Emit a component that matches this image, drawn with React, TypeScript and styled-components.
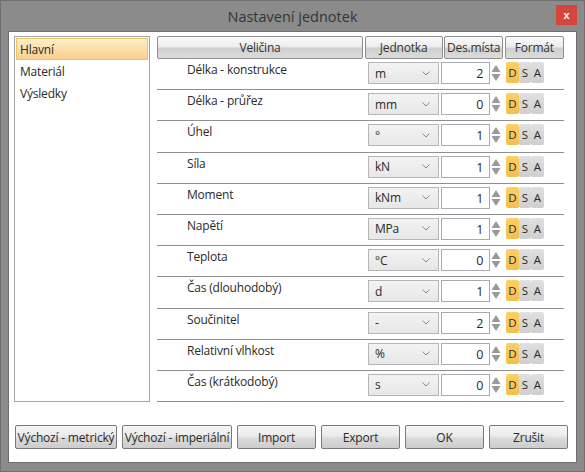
import React from 'react';
import styled, { createGlobalStyle } from 'styled-components';

const GlobalStyle = createGlobalStyle`
  html, body {
    margin: 0;
    padding: 0;
    background: #8a8a8a;
  }
  body {
    font-family: "Open Sans", "Noto Sans", sans-serif;
    font-size: 12px;
    letter-spacing: -0.2px;
    color: #333;
  }
`;

interface UnitRow {
  name: string;
  unit: string;
  decimals: number;
}

const rows: UnitRow[] = [
  { name: 'Délka - konstrukce', unit: 'm', decimals: 2 },
  { name: 'Délka - průřez', unit: 'mm', decimals: 0 },
  { name: 'Úhel', unit: '°', decimals: 1 },
  { name: 'Síla', unit: 'kN', decimals: 1 },
  { name: 'Moment', unit: 'kNm', decimals: 1 },
  { name: 'Napětí', unit: 'MPa', decimals: 1 },
  { name: 'Teplota', unit: '°C', decimals: 0 },
  { name: 'Čas (dlouhodobý)', unit: 'd', decimals: 1 },
  { name: 'Součinitel', unit: '-', decimals: 2 },
  { name: 'Relativní vlhkost', unit: '%', decimals: 0 },
  { name: 'Čas (krátkodobý)', unit: 's', decimals: 0 },
];

const sections = ['Hlavní', 'Materiál', 'Výsledky'];

const bottomButtons = [
  { label: 'Výchozí - metrický', width: 102 },
  { label: 'Výchozí - imperiální', width: 110 },
  { label: 'Import', width: 79 },
  { label: 'Export', width: 79 },
  { label: 'OK', width: 79 },
  { label: 'Zrušit', width: 79 },
];

function App() {
  const [selected, setSelected] = React.useState(0);

  return (
    <>
      <GlobalStyle />
      <Window>
        <TitleBar>
          <Title>Nastavení jednotek</Title>
          <CloseButton>x</CloseButton>
        </TitleBar>
        <Body>
          <Main>
            <SectionList>
              {sections.map((s, i) => (
                <SectionItem key={s} $active={i === selected} onClick={() => setSelected(i)}>
                  {s}
                </SectionItem>
              ))}
            </SectionList>
            <Table>
              <HeaderRow>
                <HeaderCell>Veličina</HeaderCell>
                <HeaderCell>Jednotka</HeaderCell>
                <HeaderCell>Des.místa</HeaderCell>
                <HeaderCell>Formát</HeaderCell>
              </HeaderRow>
              {rows.map((r) => (
                <Row key={r.name}>
                  <Label>{r.name}</Label>
                  <Combo>
                    <span>{r.unit}</span>
                    <svg width="8" height="5" viewBox="0 0 8 5">
                      <polyline points="0.5,0.5 4,4 7.5,0.5" fill="none" stroke="#8a8a8a" strokeWidth="1" />
                    </svg>
                  </Combo>
                  <NumberCell>
                    <NumberBox>{r.decimals}</NumberBox>
                    <Spinner>
                      <svg width="10" height="20" viewBox="0 0 10 20">
                        <polygon points="5,2 9.5,9 0.5,9" fill="#9a9a9a" />
                        <polygon points="0.5,11 9.5,11 5,18" fill="#9a9a9a" />
                      </svg>
                    </Spinner>
                  </NumberCell>
                  <FormatGroup>
                    <FormatButton $active>D</FormatButton>
                    <FormatButton>S</FormatButton>
                    <FormatButton>A</FormatButton>
                  </FormatGroup>
                </Row>
              ))}
            </Table>
          </Main>
          <ButtonBar>
            {bottomButtons.map((b) => (
              <DialogButton key={b.label} $width={b.width}>
                {b.label}
              </DialogButton>
            ))}
          </ButtonBar>
        </Body>
      </Window>
    </>
  );
}

export default App;

const Window = styled.div({
  width: 585,
  height: 472,
  boxSizing: 'border-box',
  background: '#8b8b8b',
  border: '1px solid #6f6f6f',
  display: 'flex',
  flexDirection: 'column',
  padding: '0 7px 8px 7px',
});

const TitleBar = styled.div({
  height: 30,
  position: 'relative',
  display: 'flex',
  alignItems: 'center',
  justifyContent: 'center',
});

const Title = styled.div({
  fontSize: 14.5,
  color: '#353535',
  marginTop: 1,
  letterSpacing: 0,
});

const CloseButton = styled.div({
  position: 'absolute',
  right: 0,
  top: 4,
  width: 21,
  height: 20,
  background: '#d4463f',
  color: '#fff',
  fontSize: 11,
  fontWeight: 700,
  display: 'flex',
  alignItems: 'center',
  justifyContent: 'center',
  fontFamily: '"Liberation Sans", sans-serif',
});

const Body = styled.div({
  flex: 1,
  background: '#fff',
  border: '1px solid #6e6e6e',
  display: 'flex',
  flexDirection: 'column',
  padding: '4px 8px 13px 5px',
});

const Main = styled.div({
  display: 'flex',
  gap: 7,
  height: 366,
});

const SectionList = styled.div({
  width: 136,
  boxSizing: 'border-box',
  border: '1px solid #a5a5a5',
  padding: 1,
  display: 'flex',
  flexDirection: 'column',
});

const SectionItem = styled.div<{ $active?: boolean }>(({ $active }) => ({
  height: 22,
  lineHeight: '21px',
  padding: '0 3px',
  fontSize: 12,
  boxSizing: 'border-box',
  border: $active ? '1px solid #e6c46a' : '1px solid transparent',
  background: $active ? 'linear-gradient(#fdefc6, #fbcf8e)' : 'transparent',
  color: '#2a2a2a',
  cursor: 'pointer',
}));

const Table = styled.div({
  width: 407,
  display: 'flex',
  flexDirection: 'column',
});

const HeaderRow = styled.div({
  display: 'grid',
  gridTemplateColumns: '206px 78px 59px 59px',
  columnGap: 1.6,
  height: 23,
});

const HeaderCell = styled.div({
  boxSizing: 'border-box',
  border: '1px solid #8e8e8e',
  borderRadius: 2,
  background: 'linear-gradient(#fbfbfb 0%, #ececec 45%, #cfcfcf 55%, #dcdcdc 100%)',
  display: 'flex',
  alignItems: 'center',
  justifyContent: 'center',
  fontSize: 12,
  color: '#333',
});

const Row = styled.div({
  display: 'grid',
  gridTemplateColumns: '208px 76px 60px 63px',
  height: 31.2,
  boxSizing: 'border-box',
  borderBottom: '1px solid #8f8f8f',
  alignItems: 'start',
});

const Label = styled.div({
  paddingLeft: 30,
  paddingTop: 2,
  fontSize: 12,
  color: '#2a2a2a',
});

const Combo = styled.div({
  marginTop: 3,
  marginLeft: 3,
  width: 71,
  height: 22,
  boxSizing: 'border-box',
  border: '1px solid #b5b5b5',
  background: 'linear-gradient(#f3f3f3, #e7e7e7)',
  display: 'flex',
  alignItems: 'center',
  justifyContent: 'space-between',
  padding: '0 8px 0 6px',
  fontSize: 12,
  color: '#2a2a2a',
});

const NumberCell = styled.div({
  marginTop: 3,
  display: 'flex',
  alignItems: 'center',
});

const NumberBox = styled.div({
  width: 50,
  height: 22,
  boxSizing: 'border-box',
  border: '1px solid #a9abb2',
  background: '#fff',
  textAlign: 'right',
  lineHeight: '21px',
  paddingRight: 6,
  fontSize: 12.5,
  color: '#2a2a2a',
});

const Spinner = styled.div({
  width: 11,
  display: 'flex',
  justifyContent: 'center',
});

const FormatGroup = styled.div({
  marginTop: 3,
  marginLeft: 5,
  display: 'flex',
});

const FormatButton = styled.div<{ $active?: boolean }>(({ $active }) => ({
  width: 12.5,
  height: 21,
  borderRadius: 2,
  background: $active ? 'linear-gradient(#fbd068, #f3bf4f)' : 'linear-gradient(#e0e0e0, #cfcfcf)',
  display: 'flex',
  alignItems: 'center',
  justifyContent: 'center',
  fontSize: 11.5,
  color: '#2a2a2a',
}));

const ButtonBar = styled.div({
  marginTop: 'auto',
  display: 'flex',
  gap: 5,
  paddingLeft: 1,
});

const DialogButton = styled.div<{ $width: number }>(({ $width }) => ({
  width: $width,
  height: 24,
  boxSizing: 'border-box',
  border: '1px solid #7a7a7a',
  borderRadius: 2,
  background: 'linear-gradient(#f6f6f6 0%, #ebebeb 45%, #dadada 55%, #cdcdcd 100%)',
  display: 'flex',
  alignItems: 'center',
  justifyContent: 'center',
  fontSize: 12,
  color: '#2a2a2a',
  whiteSpace: 'nowrap',
  overflow: 'hidden',
  cursor: 'pointer',
}));
